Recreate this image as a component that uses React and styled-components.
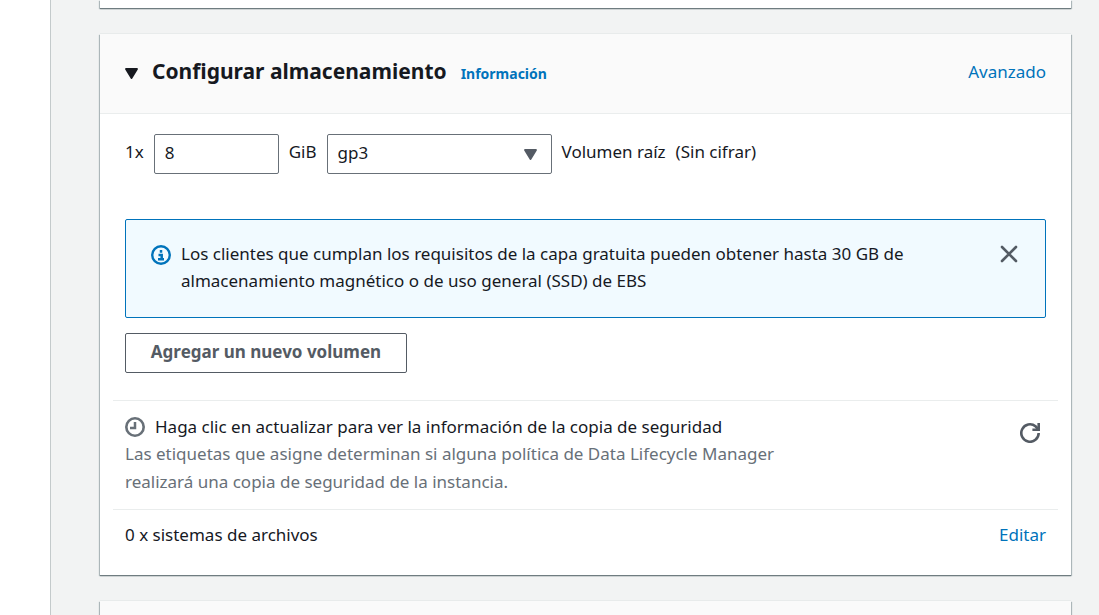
import React, { useState } from "react";
import styled, { createGlobalStyle } from "styled-components";

const GlobalStyle = createGlobalStyle`
  *, *::before, *::after { box-sizing: border-box; }
  html, body { margin: 0; }
  body {
    background: #f2f3f3;
    color: #16191f;
    font-family: "Noto Sans", "Open Sans", sans-serif;
    font-size: 17px;
    line-height: 27px;
    overflow: hidden;
  }
  button, input, select { font: inherit; color: inherit; }
`;

const Page = styled.div`
  display: flex;
  height: 100vh;
  overflow: hidden;
`;

const SideRail = styled.aside`
  flex: 0 0 51px;
  background: #fff;
  border-right: 1px solid #c4cacb;
`;

const Main = styled.main`
  flex: 1;
  min-width: 0;
  display: flex;
  flex-direction: column;
  gap: 26px;
  padding: 0 28px 0 49px;
`;

const Card = styled.section`
  flex: none;
  background: #fff;
  box-shadow: 0 -1px 0 #e8ebeb, 0 1px 1px #6f7c80, -1px 1px 1px #b9c2c4, 1px 1px 1px #b9c2c4;
`;

const CardEnd = styled(Card)`
  height: 8px;
`;

const CardStart = styled(Card)`
  height: 80px;
  background: #fafafa;
`;

const CardHeader = styled.header`
  display: flex;
  align-items: center;
  height: 80px;
  padding: 0 25px;
  background: #fafafa;
  border-bottom: 1px solid #eaeded;
`;

const PlainButton = styled.button`
  display: flex;
  align-items: center;
  padding: 0;
  border: 0;
  background: none;
  color: #545b64;
  cursor: pointer;
`;

const Title = styled.h2`
  flex: 1;
  display: flex;
  align-items: baseline;
  gap: 14px;
  margin: 0;
  padding: 0 0 2px;
  font-size: 21px;
  line-height: 28px;
`;

const Toggle = styled(PlainButton)`
  align-items: baseline;
  gap: 14px;
  color: #16191f;
  svg { margin-bottom: 5px; }
`;

const Link = styled.a`
  color: #0073bb;
  text-decoration: none;
  font-size: ${(p) => (p.$small ? "14px" : "17px")};
`;

const HeaderLink = styled(Link)`
  padding-bottom: 4px;
`;

const CardBody = styled.div`
  padding: 20px 13px 14px;
`;

const Inset = styled.div`
  padding: 0 12px;
`;

const VolumeRow = styled.div`
  display: flex;
  align-items: center;
  gap: 10px;
  margin-bottom: 45px;
  white-space: nowrap;
`;

const Label = styled.label`
  padding-bottom: 6px;
`;

const Field = styled.input`
  width: 125px;
  height: 40px;
  padding: 0 10px 3px;
  border: 1px solid #687078;
  border-radius: 2px;
  background: #fff;
  outline: none;
`;

const SelectWrap = styled.div`
  position: relative;
  width: 225px;
  color: #545b64;
  svg {
    position: absolute;
    right: 15px;
    top: 15px;
    pointer-events: none;
  }
`;

const Select = styled.select`
  appearance: none;
  display: block;
  width: 100%;
  height: 40px;
  padding: 0 10px 3px;
  border: 1px solid #687078;
  border-radius: 2px;
  background: #fff;
  color: #16191f;
`;

const Alert = styled.div`
  display: flex;
  align-items: flex-start;
  gap: 10px;
  margin-bottom: 15px;
  padding: 20px 26px 23px 25px;
  background: #f1faff;
  border: 1px solid #0073bb;
  border-radius: 2px;
  svg { flex: none; }
`;

const AlertIcon = styled.span`
  display: flex;
  padding-top: 5px;
`;

const AlertText = styled.p`
  flex: 1;
  margin: 0;
  padding-right: 60px;
`;

const Dismiss = styled(PlainButton)`
  padding-top: 4px;
`;

const OutlineButton = styled.button`
  display: block;
  width: 282px;
  height: 40px;
  margin-bottom: 27px;
  padding: 0 0 3px;
  border: 1px solid #545b64;
  border-radius: 2px;
  background: #fff;
  color: #545b64;
  font-weight: 700;
  cursor: pointer;
`;

const InfoRow = styled.div`
  display: flex;
  justify-content: space-between;
  align-items: flex-start;
  padding: 11px 12px 13px;
  border-top: 1px solid #eaeded;
`;

const BackupTitle = styled.div`
  display: flex;
  align-items: center;
  gap: 10px;
  padding-top: 1px;
`;

const Hint = styled.p`
  max-width: 660px;
  margin: 0;
  color: #687078;
  line-height: 28px;
`;

const Refresh = styled(PlainButton)`
  padding: 11px 6px 0;
`;

const Caret = () => (
  <svg width="13" height="11" viewBox="0 0 14 12" fill="currentColor" stroke="currentColor" strokeWidth="2" strokeLinejoin="round" aria-hidden="true">
    <path d="M1 1h12L7 11z" />
  </svg>
);

const InfoIcon = () => (
  <svg width="20" height="20" viewBox="0 0 20 20" fill="none" stroke="#0073bb" aria-hidden="true">
    <circle cx="10" cy="10" r="8.8" strokeWidth="2.4" />
    <path d="M10 5v2.8M7.5 10h3.2v4M7 14.2h6" strokeWidth="2.5" />
  </svg>
);

const CloseIcon = () => (
  <svg width="20" height="20" viewBox="0 0 20 20" fill="none" stroke="currentColor" strokeWidth="2.6" strokeLinecap="round" aria-hidden="true">
    <path d="M3 3l14 14M17 3L3 17" />
  </svg>
);

const ClockIcon = () => (
  <svg width="20" height="20" viewBox="0 0 20 20" fill="none" stroke="#687078" aria-hidden="true">
    <circle cx="10" cy="10" r="8.7" strokeWidth="2.6" />
    <path d="M10 5v6H5" strokeWidth="2.5" />
  </svg>
);

const RefreshIcon = () => (
  <svg width="20" height="20" viewBox="0 0 20 20" fill="none" stroke="currentColor" strokeWidth="2.6" aria-hidden="true">
    <path d="M18.7 10a8.7 8.7 0 1 1-3.2-6.7L18 6" />
    <path d="M18.7 0v6.7H12.4" />
  </svg>
);

export default function App() {
  const [size, setSize] = useState("8");
  return (
    <>
      <GlobalStyle />
      <Page>
        <SideRail />
        <Main>
          <CardEnd />
          <Card>
            <CardHeader>
              <Title>
                <Toggle type="button" aria-expanded="true">
                  <Caret />
                  Configurar almacenamiento
                </Toggle>
                <Link href="#info" $small>Información</Link>
              </Title>
              <HeaderLink href="#avanzado">Avanzado</HeaderLink>
            </CardHeader>
            <CardBody>
              <Inset>
                <VolumeRow>
                  <Label htmlFor="size">1x</Label>
                  <Field id="size" value={size} onChange={(e) => setSize(e.target.value)} />
                  <Label htmlFor="type">GiB</Label>
                  <SelectWrap>
                    <Select id="type" defaultValue="gp3">
                      <option>gp3</option>
                    </Select>
                    <Caret />
                  </SelectWrap>
                  <Label as="span">Volumen raíz</Label>
                  <Label as="span">(Sin cifrar)</Label>
                </VolumeRow>
                <Alert>
                  <AlertIcon><InfoIcon /></AlertIcon>
                  <AlertText>
                    Los clientes que cumplan los requisitos de la capa gratuita pueden obtener hasta 30 GB de
                    almacenamiento magnético o de uso general (SSD) de EBS
                  </AlertText>
                  <Dismiss type="button" aria-label="Cerrar"><CloseIcon /></Dismiss>
                </Alert>
                <OutlineButton type="button">Agregar un nuevo volumen</OutlineButton>
              </Inset>
              <InfoRow>
                <div>
                  <BackupTitle>
                    <ClockIcon />
                    Haga clic en actualizar para ver la información de la copia de seguridad
                  </BackupTitle>
                  <Hint>
                    Las etiquetas que asigne determinan si alguna política de Data Lifecycle Manager
                    realizará una copia de seguridad de la instancia.
                  </Hint>
                </div>
                <Refresh type="button" aria-label="Actualizar"><RefreshIcon /></Refresh>
              </InfoRow>
              <InfoRow>
                <span>0 x sistemas de archivos</span>
                <Link href="#editar">Editar</Link>
              </InfoRow>
            </CardBody>
          </Card>
          <CardStart />
        </Main>
      </Page>
    </>
  );
}
